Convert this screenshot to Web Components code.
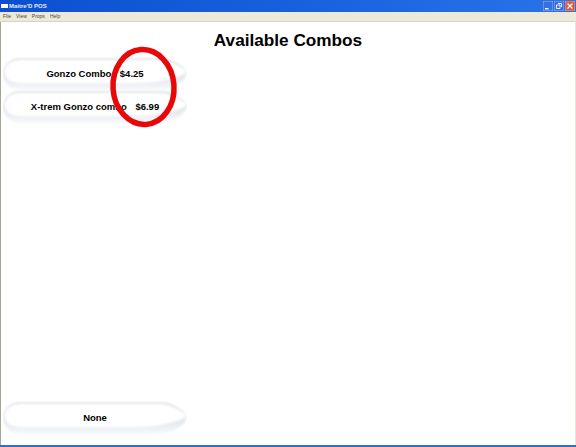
<!DOCTYPE html>
<html>
<head>
<meta charset="utf-8">
<title>Maitre'D POS</title>
<style>
  html, body { margin: 0; padding: 0; height: 100%; overflow: hidden; background: #fff; }
  body { font-family: "Liberation Sans", Arial, sans-serif; }
</style>
</head>
<body>
<pos-window caption="Maitre'D POS">
  <combo-screen heading="Available Combos">
    <combo-button name="Gonzo Combo" price="$4.25"></combo-button>
    <combo-button name="X-trem Gonzo combo" price="$6.99"></combo-button>
    <combo-button slot="footer" name="None"></combo-button>
  </combo-screen>
  <red-circle></red-circle>
</pos-window>
<script>
class PosWindow extends HTMLElement {
  constructor() {
    super();
    this.attachShadow({ mode: 'open' });
  }
  connectedCallback() {
    const caption = this.getAttribute('caption') || '';
    this.shadowRoot.innerHTML = `
      <style>
        :host { display: flex; flex-direction: column; position: relative; width: 576px; height: 447px; overflow: hidden; }
        .title {
          height: 12px; display: flex; align-items: center; gap: 1px; padding: 0 1px 0 1px; flex: none;
          background: linear-gradient(90deg, #0a4fd0 0, #1a64e0 60%, #2a74e8 100%);
          color: #e8eefc; font-size: 6px; font-weight: bold;
        }
        .app { width: 7px; height: 4px; background: #fff; flex: none; }
        .caption { flex: 1; }
        .btns { display: flex; gap: 1px; }
        .btns svg { display: block; }
        .menu {
          height: 8px; flex: none; display: flex; gap: 5px; padding: 0 3px 1px; align-items: center; box-sizing: content-box;
          background: #ece9d8; color: #444; font-size: 5px; border-bottom: 1px solid #d8d4c4;
        }
        .body { flex: 1; display: flex; min-height: 0; border-left: 1px solid #a5a593; border-right: 1px solid #e6e4d8; background: #fff; }
        .bottom { height: 2px; flex: none; background: #2f6fc8; }
      </style>
      <div class="title">
        <span class="app"></span>
        <span class="caption">${caption}</span>
        <span class="btns">
          <svg width="10" height="10" viewBox="0 0 10 10"><rect width="10" height="10" rx="1" fill="#3a6fe0" stroke="#cdd9f5" stroke-width=".6"/><rect x="2" y="7" width="3.5" height="1.4" fill="#fff"/></svg>
          <svg width="10" height="10" viewBox="0 0 10 10"><rect width="10" height="10" rx="1" fill="#3a6fe0" stroke="#cdd9f5" stroke-width=".6"/><path d="M2.5 4h3.5v3.5H2.5zM4 2.5h3.5V6" fill="none" stroke="#fff" stroke-width=".9"/></svg>
          <svg width="10" height="10" viewBox="0 0 10 10"><rect width="10" height="10" rx="1" fill="#d9593a" stroke="#f0d0c4" stroke-width=".6"/><path d="M2.5 2.5l5 5M7.5 2.5l-5 5" stroke="#fff" stroke-width="1.2"/></svg>
        </span>
      </div>
      <div class="menu"><span>File</span><span>View</span><span>Props</span><span>Help</span></div>
      <div class="body"><slot></slot></div>
      <div class="bottom"></div>
      <slot name="overlay"></slot>
    `;
  }
}

class ComboScreen extends HTMLElement {
  constructor() {
    super();
    this.attachShadow({ mode: 'open' });
  }
  connectedCallback() {
    const heading = this.getAttribute('heading') || '';
    this.shadowRoot.innerHTML = `
      <style>
        :host { display: flex; flex-direction: column; flex: 1; min-height: 0; padding-bottom: 11px; }
        h1 { margin: 0; height: 35px; padding-top: 8px; box-sizing: border-box; text-align: center; font-size: 17.2px; line-height: 20px; font-weight: bold; color: #000; }
        .list { display: flex; flex-direction: column; padding-left: 2px; }
        .spacer { flex: 1; }
        .foot { padding-left: 2px; }
      </style>
      <h1>${heading}</h1>
      <div class="list"><slot></slot></div>
      <div class="spacer"></div>
      <div class="foot"><slot name="footer"></slot></div>
    `;
  }
}

class ComboButton extends HTMLElement {
  constructor() {
    super();
    this.attachShadow({ mode: 'open' });
  }
  connectedCallback() {
    const name = this.getAttribute('name') || '';
    const price = this.getAttribute('price');
    this.shadowRoot.innerHTML = `
      <style>
        :host { display: block; position: relative; width: 184px; height: 33px; }
        svg { position: absolute; left: 0; top: 0; }
        .label {
          position: relative; height: 100%; display: flex; align-items: center; justify-content: center; gap: 8.5px;
          font-size: 9.5px; font-weight: bold; color: #000;
        }
      </style>
      <svg width="184" height="34" viewBox="0 0 184 34">
        <defs>
          <linearGradient id="rim" x1="0" y1="0" x2="0" y2="1">
            <stop offset="0" stop-color="#e4e6ea"/>
            <stop offset=".65" stop-color="#e6eaf0"/>
            <stop offset="1" stop-color="#f7f8fa"/>
          </linearGradient>
          <filter id="soft" x="-5%" y="-10%" width="110%" height="120%"><feGaussianBlur stdDeviation="1"/></filter>
        </defs>
        <path d="M17 1H158C172 1 182 11 184 16C182 26 168 33 150 33H17C7 33 0 26 0 17C0 8 7 1 17 1Z" fill="url(#rim)" filter="url(#soft)"/>
        <path d="M18 3H156C168 3 178 10 184 15C172 23 150 26 130 26H19C8 26 2 22 2 15C2 8 8 3 18 3Z" fill="#fff" filter="url(#soft)"/>
      </svg>
      <div class="label"><span>${name}</span>${price ? `<span>${price}</span>` : ''}</div>
    `;
  }
}

class RedCircle extends HTMLElement {
  constructor() {
    super();
    this.attachShadow({ mode: 'open' });
  }
  connectedCallback() {
    this.setAttribute('slot', 'overlay');
    this.shadowRoot.innerHTML = `
      <style>
        :host { position: absolute; left: 106px; top: 44px; width: 76px; height: 86px; pointer-events: none; }
        svg { display: block; }
      </style>
      <svg width="76" height="86" viewBox="0 0 76 86">
        <ellipse cx="37.5" cy="43" rx="30.5" ry="37.5" fill="none" stroke="#e80808" stroke-width="5.5" transform="rotate(-4 37.5 43)"/>
      </svg>
    `;
  }
}

customElements.define('pos-window', PosWindow);
customElements.define('combo-screen', ComboScreen);
customElements.define('combo-button', ComboButton);
customElements.define('red-circle', RedCircle);
</script>
</body>
</html>
